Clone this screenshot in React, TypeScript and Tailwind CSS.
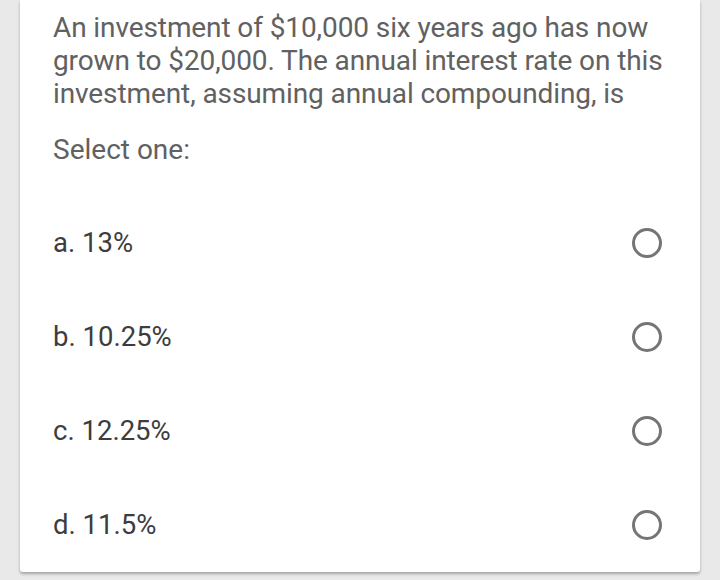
import React from "react";

const options = ["a. 13%", "b. 10.25%", "c. 12.25%", "d. 11.5%"];

const Radio = () => (
  <svg width="32" height="32" viewBox="0 0 32 32" className="shrink-0">
    <circle cx="16" cy="16" r="13.5" fill="none" stroke="#757575" strokeWidth="3" />
  </svg>
);

export default function App() {
  return (
    <div
      className="w-[720px] h-[580px] bg-[#e9e9e9] overflow-hidden"
      style={{ fontFamily: "Roboto, 'Liberation Sans', sans-serif" }}
    >
      <div className="mx-[20px] h-[572px] bg-white rounded-b-[3px] shadow-[0_2px_3px_rgba(0,0,0,0.3)] pl-[33px] pr-[37px] pt-[11px]">
        <p className="text-[28px] leading-[33px] text-[#616161] tracking-[-0.1px]">
          An investment of $10,000 six years ago has now grown to $20,000. The annual interest rate on this
          investment, assuming annual compounding, is
        </p>
        <p className="mt-[23px] text-[28px] leading-[33px] text-[#616161]">Select one:</p>
        <div className="mt-[30px] flex flex-col">
          {options.map((o) => (
            <div key={o} className="h-[94px] flex items-center justify-between">
              <span className="text-[27.5px] text-[#3d3d3d]">{o}</span>
              <Radio />
            </div>
          ))}
        </div>
      </div>
    </div>
  );
}
